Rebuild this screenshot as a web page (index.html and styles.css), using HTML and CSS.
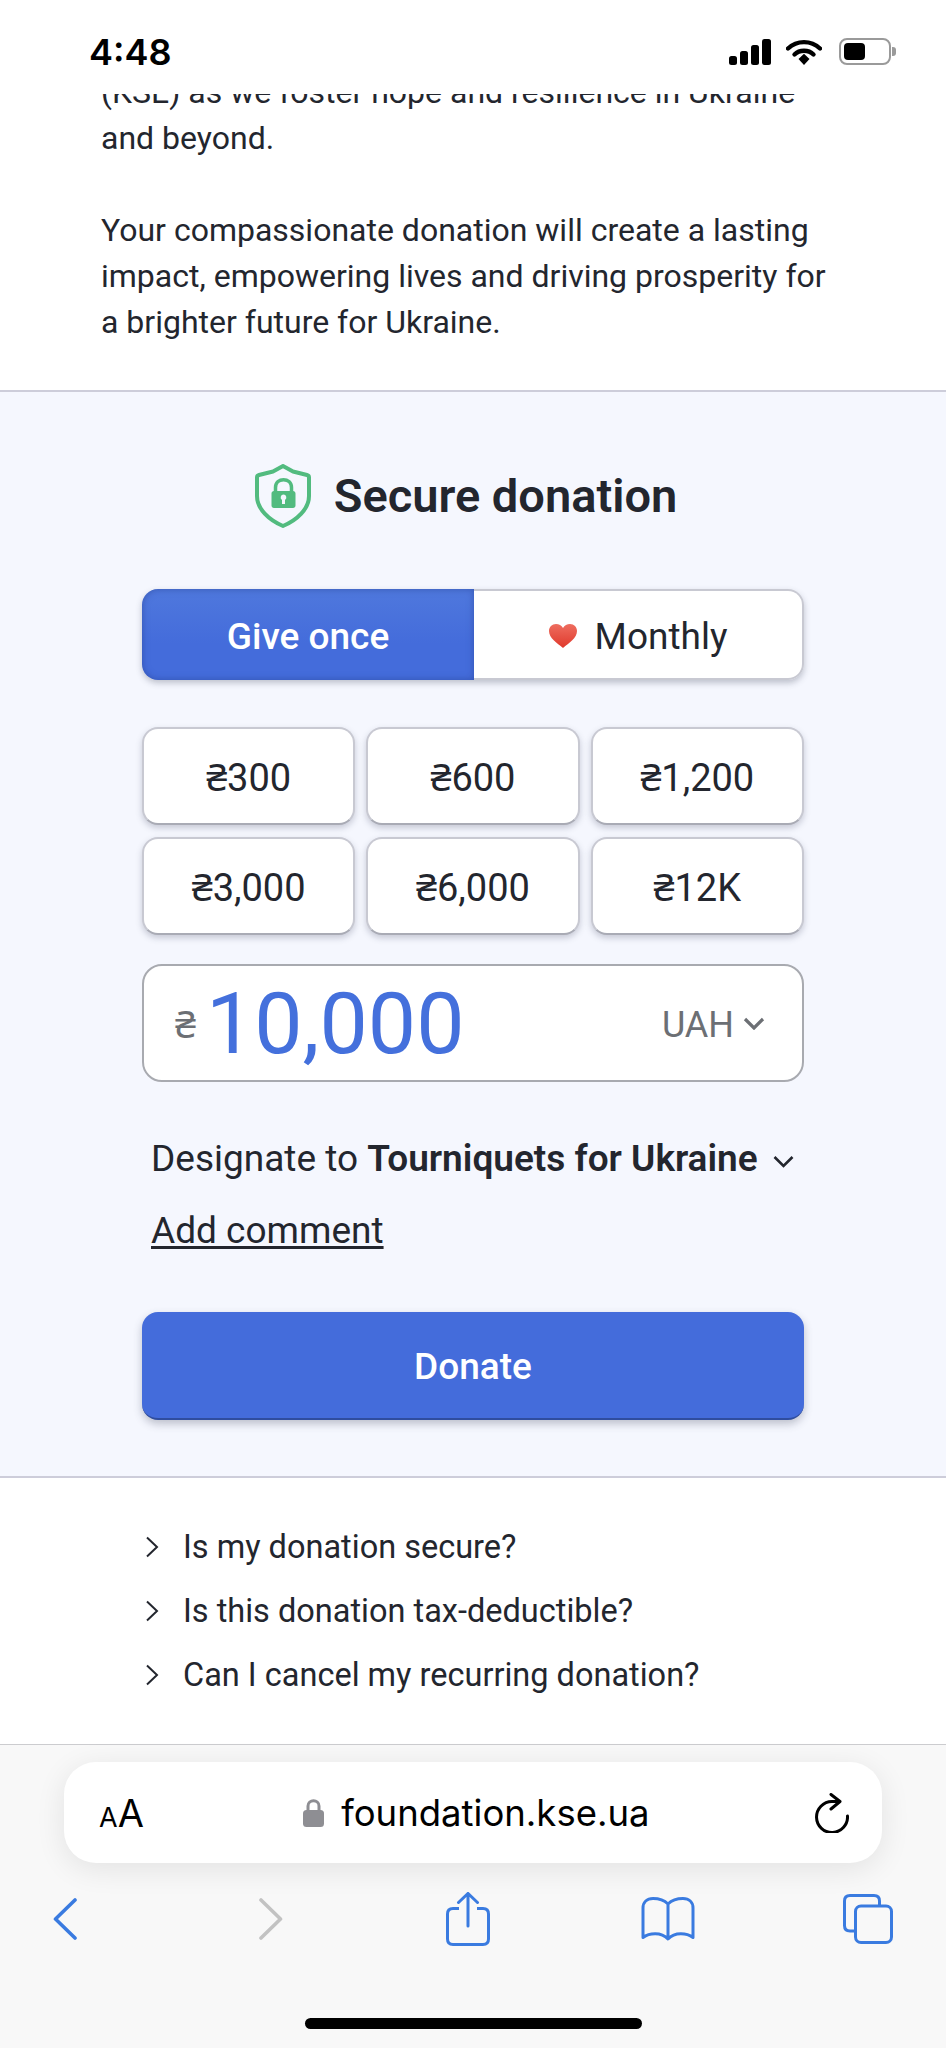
FILE: index.html
```html
<!DOCTYPE html>
<html lang="en">
<head>
    <meta charset="UTF-8">
    <meta name="viewport" content="width=device-width, initial-scale=1.0">
    <title>Secure donation</title>
    <link rel="stylesheet" href="styles.css">
</head>
<body>
    <div class="phone">
        <div class="status-bar">
            <span class="status-time">4:48</span>
            <div class="status-icons">
                <svg class="icon-signal" width="42" height="26" viewBox="0 0 42 26">
                    <rect x="0" y="17" width="8" height="9" rx="2.5"/>
                    <rect x="11" y="12" width="8" height="14" rx="2.5"/>
                    <rect x="22" y="6" width="8" height="20" rx="2.5"/>
                    <rect x="33" y="0" width="9" height="26" rx="2.5"/>
                </svg>
                <svg class="icon-wifi" width="36" height="26" viewBox="0 0 36 26">
                    <path d="M2 9.5C11 1 25 1 34 9.5" fill="none" stroke="#000" stroke-width="4.4" stroke-linecap="round"/>
                    <path d="M8.5 15.5C13.5 10.5 22.5 10.5 27.5 15.5" fill="none" stroke="#000" stroke-width="4.4" stroke-linecap="round"/>
                    <path d="M12.5 20L18 14.8L23.5 20L18 26Z"/>
                </svg>
                <div class="battery"><div class="battery-level"></div></div>
            </div>
        </div>

        <div class="intro">
            <p>(KSE) as we foster hope and resilience in Ukraine and beyond.</p>
            <p>Your compassionate donation will create a lasting impact, empowering lives and driving prosperity for a brighter future for Ukraine.</p>
        </div>

        <div class="donate">
            <div class="donate-title">
                <svg width="56" height="64" viewBox="0 0 56 64">
                    <path d="M28 2L38 7.5L52 11C53.5 11.4 54 12 54 13.5V32C54 45 42 56 28 62C14 56 2 45 2 32V13.5C2 12 2.5 11.4 4 11L18 7.5Z" fill="none" stroke="#52bb7f" stroke-width="4" stroke-linejoin="round"/>
                    <path d="M20.500 29V23.500C20.500 13 36.500 13 36.500 23.500V29" fill="none" stroke="#52bb7f" stroke-width="3.500"/>
                    <path fill-rule="evenodd" d="M19 27H38C39.500 27 40.500 28 40.500 29.500V41.500C40.500 43 39.500 44 38 44H19C17.500 44 16.500 43 16.500 41.500V29.500C16.500 28 17.500 27 19 27ZM28.500 30.500A3 3 0 0 0 27 36V40H30V36A3 3 0 0 0 28.500 30.500Z" fill="#52bb7f"/>
                </svg>
                <h2>Secure donation</h2>
            </div>

            <div class="toggle">
                <div class="toggle-item toggle-active">Give once</div>
                <div class="toggle-item">
                    <svg class="heart" width="28" height="24" viewBox="0 0 28 24">
                        <defs>
                            <linearGradient id="heart-fill" x1="0" y1="0" x2="0" y2="1">
                                <stop offset="0" stop-color="#ee6d5f"/>
                                <stop offset="1" stop-color="#e0392c"/>
                            </linearGradient>
                        </defs>
                        <path d="M14 24C8 19 0 14 0 7C0 3 3 0 7 0C10 0 12.500 1.500 14 4C15.500 1.500 18 0 21 0C25 0 28 3 28 7C28 14 20 19 14 24Z" fill="url(#heart-fill)"/>
                    </svg>
                    Monthly
                </div>
            </div>

            <div class="amounts">
                <div class="amount">₴300</div>
                <div class="amount">₴600</div>
                <div class="amount">₴1,200</div>
                <div class="amount">₴3,000</div>
                <div class="amount">₴6,000</div>
                <div class="amount">₴12K</div>
            </div>

            <div class="amount-input">
                <span class="amount-sign">₴</span>
                <span class="amount-value">10,000</span>
                <span class="amount-currency">UAH</span>
                <svg width="22" height="13" viewBox="0 0 22 13"><path d="M2 2L11 11L20 2" fill="none" stroke="#6c6f74" stroke-width="3.200"/></svg>
            </div>

            <div class="designate">
                <span>Designate to <b>Tourniquets for Ukraine</b></span>
                <svg width="21" height="13" viewBox="0 0 21 13"><path d="M1.500 2L10.500 11L19.500 2" fill="none" stroke="#23262e" stroke-width="2.600"/></svg>
            </div>
            <a class="add-comment" href="#">Add comment</a>

            <button class="donate-button">Donate</button>
        </div>

        <div class="faq">
            <div class="faq-row">
                <svg width="14" height="22" viewBox="0 0 14 22"><path d="M2 1.500L12 11L2 20.500" fill="none" stroke="#23262e" stroke-width="2"/></svg>
                Is my donation secure?
            </div>
            <div class="faq-row">
                <svg width="14" height="22" viewBox="0 0 14 22"><path d="M2 1.500L12 11L2 20.500" fill="none" stroke="#23262e" stroke-width="2"/></svg>
                Is this donation tax-deductible?
            </div>
            <div class="faq-row">
                <svg width="14" height="22" viewBox="0 0 14 22"><path d="M2 1.500L12 11L2 20.500" fill="none" stroke="#23262e" stroke-width="2"/></svg>
                Can I cancel my recurring donation?
            </div>
        </div>

        <div class="browser">
            <div class="url-bar">
                <span class="url-aa"><small>A</small>A</span>
                <span class="url-host">
                    <svg width="21" height="29" viewBox="0 0 21 29">
                        <path d="M5 13V8C5 1 16 1 16 8V13" fill="none" stroke="#8e8e93" stroke-width="3"/>
                        <rect x="0" y="12" width="21" height="17" rx="3.500" fill="#8e8e93"/>
                    </svg>
                    foundation.kse.ua
                </span>
                <svg width="34" height="40" viewBox="0 0 34 40">
                    <path d="M32.500 23A15.500 15.500 0 1 1 17 8.500H24" fill="none" stroke="#000" stroke-width="3" stroke-linecap="round"/>
                    <path d="M16 1.500L25 8.500L16 16" fill="none" stroke="#000" stroke-width="3" stroke-linecap="round" stroke-linejoin="round"/>
                </svg>
            </div>

            <div class="toolbar">
                <div class="tool">
                    <svg width="24" height="42" viewBox="0 0 24 42"><path d="M22 2L2.500 21L22 40" fill="none" stroke="#3a7be0" stroke-width="3.600" stroke-linecap="round" stroke-linejoin="round"/></svg>
                </div>
                <div class="tool tool-forward">
                    <svg width="24" height="42" viewBox="0 0 24 42"><path d="M2 2L21.500 21L2 40" fill="none" stroke="#c2c2c2" stroke-width="3.600" stroke-linecap="round" stroke-linejoin="round"/></svg>
                </div>
                <div class="tool">
                    <svg width="44" height="54" viewBox="0 0 44 54">
                        <path d="M13 16.500H7C3.500 16.500 1.500 18.500 1.500 22V47C1.500 50.500 3.500 52.500 7 52.500H37C40.500 52.500 42.500 50.500 42.500 47V22C42.500 18.500 40.500 16.500 37 16.500H31" fill="none" stroke="#3a7be0" stroke-width="3"/>
                        <path d="M22 34V2M12.500 10.500L22 1.500L31.500 10.500" fill="none" stroke="#3a7be0" stroke-width="3" stroke-linecap="round"/>
                    </svg>
                </div>
                <div class="tool">
                    <svg width="54" height="44" viewBox="0 0 54 44">
                        <path d="M27 7C23 3 17 1.500 12 1.500C6 1.500 2 5 2 11V40.500C8 36 20 34.500 27 42C34 34.500 46 36 52 40.500V11C52 5 48 1.500 42 1.500C37 1.500 31 3 27 7ZM27 7V42" fill="none" stroke="#3a7be0" stroke-width="3" stroke-linejoin="round"/>
                    </svg>
                </div>
                <div class="tool">
                    <svg width="50" height="50" viewBox="0 0 50 50">
                        <path d="M11 37H7C3.500 37 1.500 35 1.500 31.500V7C1.500 3.500 3.500 1.500 7 1.500H31C34.500 1.500 36.500 3.500 36.500 7V11" fill="none" stroke="#3a7be0" stroke-width="3"/>
                        <rect x="12.500" y="12" width="36" height="36.500" rx="5.500" fill="none" stroke="#3a7be0" stroke-width="3"/>
                    </svg>
                </div>
            </div>

            <div class="home-bar"></div>
        </div>
    </div>
</body>
</html>
```

FILE: styles.css
```css
* {
    box-sizing: border-box;
}
body {
    margin: 0;
    background: white;
    font-family: 'Roboto', 'Noto Sans', sans-serif;
    color: #23262e;
}
.phone {
    width: 946px;
    height: 2048px;
    display: flex;
    flex-direction: column;
    overflow: hidden;
}

/* status bar */
.status-bar {
    height: 94px;
    flex: none;
    display: flex;
    justify-content: space-between;
    align-items: flex-start;
    padding: 31px 55px 0 89px;
    background: white;
}
.status-time {
    font-family: 'Inter', sans-serif;
    font-size: 36px;
    font-weight: 600;
    line-height: 42px;
    color: #000;
}
.status-icons {
    display: flex;
    align-items: center;
    gap: 15px;
    margin-top: 7px;
}
.icon-signal {
    display: block;
}
.icon-wifi {
    display: block;
    margin-right: 2px;
}
.battery {
    position: relative;
    width: 52px;
    height: 27px;
    padding: 3px;
    border: 2px solid #9a9a9a;
    border-radius: 8px;
}
.battery::after {
    content: '';
    position: absolute;
    right: -7px;
    top: 7px;
    width: 4px;
    height: 9px;
    background: #9a9a9a;
    border-radius: 0 3px 3px 0;
}
.battery-level {
    width: 21px;
    height: 100%;
    background: #000;
    border-radius: 4px;
}

/* text above the form, scrolled under the status bar */
.intro {
    height: 298px;
    flex: none;
    display: flex;
    flex-direction: column;
    justify-content: flex-end;
    overflow: hidden;
    padding: 0 101px 45px;
    font-size: 32px;
    line-height: 46px;
    border-bottom: 2px solid #cdcdda;
}
.intro p {
    margin: 0;
}
.intro p + p {
    margin-top: 46px;
}

/* donation form */
.donate {
    flex: none;
    height: 1086px;
    padding: 72px 142px 0;
    background: #f5f7fe;
    border-bottom: 2px solid #cdcdda;
}
.donate-title {
    display: flex;
    align-items: center;
    justify-content: center;
    gap: 23px;
    height: 64px;
    padding-right: 14px;
}
.donate-title h2 {
    margin: 0 0 2px;
    font-size: 47px;
    font-weight: 600;
}
.toggle {
    display: flex;
    height: 91px;
    margin-top: 61px;
    border-radius: 16px;
    box-shadow: 0 3px 6px rgba(60, 65, 90, 0.3);
}
.toggle-item {
    flex: 1;
    display: flex;
    align-items: center;
    justify-content: center;
    gap: 18px;
    padding-top: 3px;
    background: white;
    border: 2px solid #c8c9d2;
    border-left: none;
    border-radius: 0 16px 16px 0;
    font-size: 37px;
}
.toggle-active {
    flex: none;
    width: 332px;
    background: linear-gradient(#4f78dd, #446cdb 60%);
    border: none;
    border-radius: 16px 0 0 16px;
    box-shadow: inset 0 0 7px rgba(35, 60, 140, 0.55);
    color: white;
    font-weight: 500;
}
.amounts {
    display: grid;
    grid-template-columns: repeat(3, 1fr);
    gap: 12px 11px;
    margin-top: 47px;
}
.amount {
    height: 98px;
    display: flex;
    align-items: center;
    justify-content: center;
    background: white;
    border: 2px solid #c8c9d2;
    border-bottom-color: #a9abb5;
    border-radius: 16px;
    box-shadow: 0 3px 6px rgba(60, 65, 90, 0.25);
    font-size: 38px;
}
.amount-input {
    display: flex;
    align-items: center;
    height: 118px;
    margin-top: 29px;
    padding: 0 37px 0 31px;
    background: white;
    border: 2px solid #a8aab0;
    border-radius: 20px;
}
.amount-sign {
    font-size: 38px;
    color: #6c6f74;
}
.amount-value {
    flex: 1;
    margin-left: 10px;
    font-size: 86px;
    color: #4470dc;
}
.amount-currency {
    margin: 3px 9px 0 0;
    font-size: 36px;
    color: #6c6f74;
}
.designate {
    display: flex;
    align-items: center;
    justify-content: space-between;
    height: 46px;
    margin-top: 53px;
    padding: 0 10px 0 9px;
    font-size: 37px;
}
.designate b {
    font-weight: 600;
}
.designate svg {
    margin-top: 6px;
}
.add-comment {
    display: block;
    width: max-content;
    height: 46px;
    margin: 27px 0 0 9px;
    font-size: 37px;
    line-height: 46px;
    color: #23262e;
    text-underline-offset: 3px;
}
.donate-button {
    display: block;
    width: 100%;
    height: 108px;
    margin-top: 58px;
    padding-top: 4px;
    background: #446cdb;
    border: none;
    border-bottom: 2px solid #2f4d9f;
    border-radius: 16px;
    box-shadow: 0 4px 8px rgba(60, 65, 90, 0.3);
    font-family: inherit;
    font-size: 37px;
    font-weight: 500;
    color: white;
}

/* questions */
.faq {
    flex: none;
    height: 267px;
    padding: 37px 0 0 145px;
    background: white;
    border-bottom: 1px solid #cccccf;
}
.faq-row {
    display: flex;
    align-items: center;
    gap: 24px;
    height: 64px;
    font-size: 32.5px;
}

/* safari chrome */
.browser {
    flex: 1;
    padding-top: 17px;
    background: #f8f8f8;
}
.url-bar {
    display: flex;
    align-items: center;
    justify-content: space-between;
    height: 101px;
    margin: 0 64px;
    padding: 0 33px 0 35px;
    background: white;
    border-radius: 32px;
    box-shadow: 0 6px 30px rgba(0, 0, 0, 0.09);
}
.url-aa {
    font-family: 'Inter', sans-serif;
    font-size: 38px;
    color: #000;
}
.url-aa small {
    font-size: 27px;
}
.url-host {
    display: flex;
    align-items: center;
    gap: 17px;
    margin-right: 6px;
    font-family: 'Inter', sans-serif;
    font-size: 36.5px;
    color: #000;
}
.toolbar {
    display: flex;
    gap: 140px;
    height: 54px;
    margin-top: 29px;
    padding-left: 35px;
}
.tool {
    width: 60px;
    display: flex;
    align-items: center;
    justify-content: center;
}
.tool-forward {
    margin-left: 6px;
    margin-right: -3px;
}
.home-bar {
    width: 337px;
    height: 11px;
    margin: 72px 0 0 305px;
    background: #000;
    border-radius: 6px;
}
```
